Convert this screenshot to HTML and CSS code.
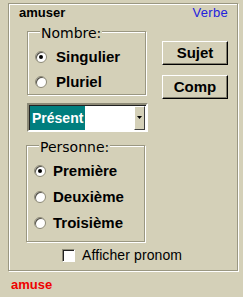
FILE: index.html
```html
<!DOCTYPE html>
<html lang="fr">
<head>
<meta charset="utf-8">
<title>Verbe</title>
<link rel="stylesheet" href="styles.css">
</head>
<body>
<div class="frame">
  <div class="header">
    <span class="word">amuser</span>
    <span class="kind">Verbe</span>
  </div>
  <div class="main">
    <div class="left">
      <fieldset class="group nombre">
        <legend>Nombre:</legend>
        <div class="opt"><span class="radio on"></span><span class="lbl">Singulier</span></div>
        <div class="opt"><span class="radio"></span><span class="lbl">Pluriel</span></div>
      </fieldset>
      <div class="combo">
        <span class="sel">Présent</span>
        <span class="arrow"><svg width="7" height="4" viewBox="0 0 7 4"><path d="M1 0h5L3.5 3z" fill="#000"/></svg></span>
      </div>
      <fieldset class="group personne">
        <legend>Personne:</legend>
        <div class="opt"><span class="radio on"></span><span class="lbl">Première</span></div>
        <div class="opt"><span class="radio"></span><span class="lbl">Deuxième</span></div>
        <div class="opt"><span class="radio"></span><span class="lbl">Troisième</span></div>
      </fieldset>
    </div>
    <div class="right">
      <div class="btn">Sujet</div>
      <div class="btn">Comp</div>
    </div>
  </div>
  <div class="check"><span class="box"></span><span class="clbl">Afficher pronom</span></div>
</div>
<div class="status">amuse</div>
</body>
</html>
```
FILE: styles.css
```css
html, body {
  margin: 0;
  padding: 0;
  background: #d4d0b8;
  width: 243px;
  height: 297px;
  overflow: hidden;
}
body {
  font-family: "Liberation Sans", Arial, sans-serif;
  color: #000;
}
.frame {
  box-sizing: border-box;
  margin: 3px 0 0 8px;
  width: 230px;
  height: 268px;
  border: 1px solid #9a9782;
  box-shadow: inset 1px 1px 0 #fff, 1px 1px 0 #fff;
  padding: 1px 9px 0 10px;
}
.header {
  display: flex;
  justify-content: space-between;
  height: 15px;
  line-height: 15px;
}
.word {
  font-size: 13px;
  font-weight: bold;
}
.kind {
  font-size: 13px;
  color: #2222dd;
  letter-spacing: 0.3px;
}
.main {
  display: flex;
  margin-top: 1px;
}
.left {
  width: 120px;
  margin-left: 8px;
  display: flex;
  flex-direction: column;
}
.group {
  margin: 0;
  width: 119px;
  box-sizing: border-box;
  border: 1px solid #9a9782;
  box-shadow: inset 1px 1px 0 #fff, 1px 1px 0 #fff;
  padding: 3px 0 0 7px;
  min-width: 0;
}
.group legend {
  font-family: "DejaVu Sans", sans-serif;
  font-size: 14px;
  line-height: 16px;
  padding: 4px 1px 0;
  margin-left: 5px;
  background: #d4d0b8;
}
.opt {
  display: flex;
  align-items: center;
  height: 25px;
}
.radio {
  box-sizing: border-box;
  width: 12px;
  height: 12px;
  border-radius: 50%;
  background: #fff;
  border: 1px solid #8c8976;
  box-shadow: inset 1px 1px 0 #55534a;
  display: flex;
  align-items: center;
  justify-content: center;
  flex: none;
}
.radio.on::after {
  content: "";
  width: 4px;
  height: 4px;
  border-radius: 50%;
  background: #000;
}
.lbl {
  font-size: 15px;
  font-weight: bold;
  margin-left: 9px;
  line-height: 18px;
}
.nombre .opt:first-of-type {
  margin-top: 0;
}
.combo {
  box-sizing: border-box;
  margin-top: 8px;
  width: 121px;
  height: 29px;
  background: #fff;
  border: 2px solid;
  border-color: #8c8976 #fff #fff #8c8976;
  box-shadow: inset 1px 1px 0 #222;
  display: flex;
  align-items: stretch;
  padding: 1px 1px 0 1px;
}
.sel {
  background: #007e7e;
  color: #fff;
  font-size: 14px;
  font-weight: bold;
  padding: 0 2px 0 2px;
  display: flex;
  align-items: center;
  margin-left: 0;
}
.arrow {
  margin-left: auto;
  width: 11px;
  box-sizing: border-box;
  background: #d4d0b8;
  border: 1px solid;
  border-color: #fff #404040 #404040 #fff;
  display: flex;
  align-items: center;
  justify-content: center;
}
.personne {
  margin-top: 3px;
  margin-left: -1px;
  padding: 3px 0 5px 7px;
}
.personne .opt {
  height: 26px;
}
.personne .lbl {
  margin-left: 7px;
}
.right {
  display: flex;
  flex-direction: column;
  margin-left: 15px;
  margin-top: 20px;
  gap: 10px;
}
.btn {
  box-sizing: border-box;
  width: 66px;
  height: 24px;
  border: 1px solid;
  border-color: #fff #000 #000 #fff;
  box-shadow: inset -1px -1px 0 #807d6c;
  font-size: 15px;
  font-weight: bold;
  display: flex;
  align-items: center;
  justify-content: center;
  padding-bottom: 1px;
}
.check {
  display: flex;
  align-items: center;
  height: 16px;
  margin-top: 5px;
  margin-left: 43px;
}
.box {
  box-sizing: border-box;
  width: 13px;
  height: 13px;
  background: #fff;
  border: 1px solid;
  border-color: #8c8976 #fff #fff #8c8976;
  box-shadow: inset 1px 1px 0 #222;
}
.clbl {
  font-size: 14px;
  margin-left: 7px;
  letter-spacing: 0.1px;
}
.status {
  margin-top: 6px;
  padding-left: 11px;
  font-size: 13px;
  font-weight: bold;
  color: #ee0000;
  line-height: 15px;
}
```
